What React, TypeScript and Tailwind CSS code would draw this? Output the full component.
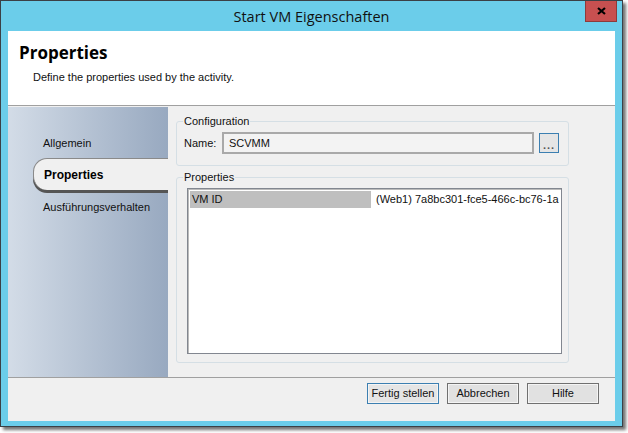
import React from "react";

const ui = { fontFamily: '"Liberation Sans", Arial, sans-serif' };

export default function App() {
  return (
    <div className="w-[628px] h-[433px] bg-white relative overflow-hidden" style={ui}>
      <div className="w-[623px] h-[427px] border border-[#3b4046] bg-[#6bcdea] flex flex-col px-[7px] pb-[5px] shadow-[3px_3px_3px_rgba(0,0,0,0.55)] relative">
        {/* title bar */}
        <div className="h-[30px] flex items-center justify-center text-[14.5px] text-[#111] shrink-0" style={{ fontFamily: '"Open Sans", sans-serif' }}>
          <span className="mt-[1px]">Start VM Eigenschaften</span>
        </div>
        <div className="absolute right-[5px] top-0 w-[32px] h-[21px] bg-[#c75050] border border-[#8e3a3a] border-t-0 flex items-center justify-center">
          <svg width="9" height="8" viewBox="0 0 9 8">
            <path d="M1 1 L8 7 M8 1 L1 7" stroke="#000" strokeWidth="2.2" />
          </svg>
        </div>
        {/* client */}
        <div className="flex-1 flex flex-col bg-[#f0f0f0] min-h-0">
          {/* header */}
          <div className="h-[75px] bg-white border-b border-[#a0a0a0] shrink-0 pt-[11px]">
            <div className="pl-[11px] text-[17px] font-bold text-black leading-[22px]" style={{ fontFamily: '"Open Sans", sans-serif' }}>Properties</div>
            <div className="pl-[25px] mt-[6px] text-[11px] text-[#111] leading-[14px]">Define the properties used by the activity.</div>
          </div>
          {/* body */}
          <div className="flex flex-1 min-h-0 border-b border-[#a0a0a0] mt-[1px]">
            <div className="w-[160px] shrink-0 bg-gradient-to-r from-[#d3dce7] to-[#98a9c0] pt-[28px] text-[11px] text-[#111]">
              <div className="pl-[35px] h-[16px] leading-[16px]">Allgemein</div>
              <div className="ml-[25px] mt-[7px] h-[32px] bg-[#f0f0f0] rounded-l-[14px] border-l border-t border-[#8a8a8a] shadow-[0_3px_0_#555] flex items-center pl-[10px] font-bold text-[12px] text-black">
                Properties
              </div>
              <div className="pl-[35px] mt-[9px] h-[16px] leading-[16px]">Ausführungsverhalten</div>
            </div>
            <div className="flex-1 pl-[8px] pr-[47px] pt-[14px] flex flex-col text-[11px] text-[#111]">
              {/* configuration group */}
              <div className="relative h-[45px] border border-[#d5dfe5] rounded-[3px] pl-[7px] pt-[10px]">
                <span className="absolute left-[6px] top-[-7px] px-[1px] bg-[#f0f0f0] leading-[12px]">Configuration</span>
                <div className="flex items-center">
                  <span className="w-[38px]">Name:</span>
                  <div className="w-[312px] h-[22px] border-2 border-[#a9a9a9] bg-[#f3f3f3] flex items-center pl-[5px]">SCVMM</div>
                  <div className="ml-[5px] w-[20px] h-[20px] border border-[#3c7fb1] bg-[#e5e5e5] flex items-end justify-center pb-[3px] leading-[8px] font-bold text-[#555] tracking-[1px]">...</div>
                </div>
              </div>
              {/* properties group */}
              <div className="relative mt-[11px] h-[186px] border border-[#d5dfe5] rounded-[3px] pl-[10px] pr-[6px] pt-[10px] pb-[8px] flex flex-col">
                <span className="absolute left-[6px] top-[-7px] px-[1px] bg-[#f0f0f0] leading-[12px]">Properties</span>
                <div className="flex-1 bg-white border border-[#828790] shadow-[inset_1px_1px_0_#bbb] p-[2px]">
                  <div className="flex h-[17px]">
                    <div className="w-[181px] bg-[#bfbfbf] pl-[2px] leading-[17px]">VM ID</div>
                    <div className="pl-[5px] leading-[17px] whitespace-nowrap">(Web1) 7a8bc301-fce5-466c-bc76-1a</div>
                  </div>
                </div>
              </div>
            </div>
          </div>
          {/* footer */}
          <div className="h-[43px] shrink-0 flex justify-end items-start pt-[5px] pr-[16px] gap-[8px] text-[11px] text-[#111]">
            <div className="w-[72px] h-[21px] border border-[#3c7fb1] bg-[#e5e5e5] shadow-[inset_0_0_0_1px_#f4f4f4] flex items-center justify-center">Fertig stellen</div>
            <div className="w-[72px] h-[21px] border border-[#707070] bg-[#e1e1e1] shadow-[inset_0_0_0_1px_#f4f4f4] flex items-center justify-center">Abbrechen</div>
            <div className="w-[72px] h-[21px] border border-[#707070] bg-[#e1e1e1] shadow-[inset_0_0_0_1px_#f4f4f4] flex items-center justify-center">Hilfe</div>
          </div>
        </div>
      </div>
    </div>
  );
}
